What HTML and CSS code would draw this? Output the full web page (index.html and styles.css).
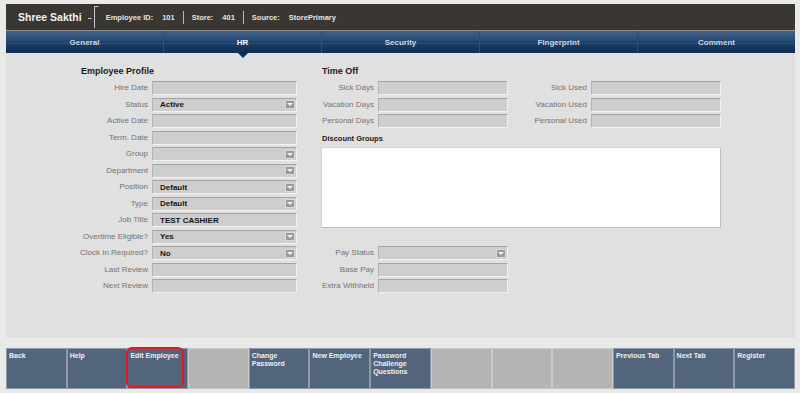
FILE: index.html
```html
<!DOCTYPE html>
<html lang="en">
<head>
    <meta charset="UTF-8">
    <title>Employee - HR</title>
    <link rel="stylesheet" href="styles.css">
</head>
<body>
    <div class="app">
        <header class="top-bar">
            <span class="emp-name">Shree Sakthi</span>
            <svg class="bracket" width="11" height="22" viewBox="0 0 11 22">
                <path d="M0 12.5H3.5M6.5 0.5V22M6.5 0.5H10.5" stroke="#c8c8c8" stroke-width="1" fill="none"/>
            </svg>
            <span class="meta-label">Employee ID:</span><span class="meta-value">101</span>
            <span class="meta-sep"></span>
            <span class="meta-label">Store:</span><span class="meta-value">401</span>
            <span class="meta-sep"></span>
            <span class="meta-label">Source:</span><span class="meta-value">StorePrimary</span>
        </header>

        <nav class="tabs">
            <div class="tab">General</div>
            <div class="tab active">HR</div>
            <div class="tab">Security</div>
            <div class="tab">Fingerprint</div>
            <div class="tab">Comment</div>
        </nav>

        <main class="panel">
            <section class="profile">
                <h3 class="section-title">Employee Profile</h3>
                <div class="form-grid">
                    <label>Hire Date</label><div class="field"></div>
                    <label>Status</label><div class="field select"><span class="value">Active</span><span class="arrow"></span></div>
                    <label>Active Date</label><div class="field"></div>
                    <label>Term. Date</label><div class="field"></div>
                    <label>Group</label><div class="field select"><span class="value"></span><span class="arrow"></span></div>
                    <label>Department</label><div class="field select"><span class="value"></span><span class="arrow"></span></div>
                    <label>Position</label><div class="field select"><span class="value">Default</span><span class="arrow"></span></div>
                    <label>Type</label><div class="field select"><span class="value">Default</span><span class="arrow"></span></div>
                    <label>Job Title</label><div class="field"><span class="value">TEST CASHIER</span></div>
                    <label>Overtime Eligible?</label><div class="field select"><span class="value">Yes</span><span class="arrow"></span></div>
                    <label>Clock In Required?</label><div class="field select"><span class="value">No</span><span class="arrow"></span></div>
                    <label>Last Review</label><div class="field"></div>
                    <label>Next Review</label><div class="field"></div>
                </div>
            </section>

            <section class="time-off">
                <h3 class="section-title">Time Off</h3>
                <div class="form-grid days-grid">
                    <label>Sick Days</label><div class="field"></div>
                    <label>Sick Used</label><div class="field"></div>
                    <label>Vacation Days</label><div class="field"></div>
                    <label>Vacation Used</label><div class="field"></div>
                    <label>Personal Days</label><div class="field"></div>
                    <label>Personal Used</label><div class="field"></div>
                </div>
                <div class="discount-label">Discount Groups</div>
                <div class="discount-box"></div>
                <div class="form-grid pay-grid">
                    <label>Pay Status</label><div class="field select"><span class="value"></span><span class="arrow"></span></div>
                    <label>Base Pay</label><div class="field"></div>
                    <label>Extra Withheld</label><div class="field"></div>
                </div>
            </section>
        </main>

        <footer class="buttons">
            <div class="btn">Back</div>
            <div class="btn">Help</div>
            <div class="btn highlighted">Edit Employee</div>
            <div class="btn empty"></div>
            <div class="btn">Change<br>Password</div>
            <div class="btn">New Employee</div>
            <div class="btn">Password<br>Challenge<br>Questions</div>
            <div class="btn empty"></div>
            <div class="btn empty"></div>
            <div class="btn empty"></div>
            <div class="btn">Previous Tab</div>
            <div class="btn">Next Tab</div>
            <div class="btn">Register</div>
        </footer>
    </div>
</body>
</html>
```

FILE: styles.css
```css
:root {
    --page-bg: #e9e9e9;
    --panel-bg: #e0e0e0;
    --header-bg: #3a3631;
    --field-bg: #cecece;
    --label-color: #737373;
    --button-bg: #52657c;
    --button-empty: #b4b4b4;
}

body {
    margin: 0;
    background: var(--page-bg);
    font-family: "Liberation Sans", Arial, sans-serif;
}

.app {
    width: 789px;
    padding: 4px 0 0 6px;
}

/* header */
.top-bar {
    height: 26px;
    background: var(--header-bg);
    border-bottom: 1px solid #8c8c8c;
    display: flex;
    align-items: center;
    padding-left: 12px;
    color: #e4e4e4;
}

.emp-name {
    font-size: 10.5px;
    font-weight: bold;
    color: #f2f2f2;
}

.bracket {
    margin-left: 6px;
    margin-right: 7px;
}

.meta-label,
.meta-value {
    font-size: 7.5px;
    font-weight: bold;
}

.meta-value {
    margin-left: 9px;
}

.meta-sep {
    width: 1px;
    height: 13px;
    background: #b8b8b8;
    margin: 0 8px;
}

/* tabs */
.tabs {
    display: flex;
    height: 22px;
    background: linear-gradient(#41638b 0%, #2c5079 35%, #1a3e68 55%, #0f2d53 100%);
}

.tab {
    flex: 1;
    position: relative;
    z-index: 0;
    display: flex;
    align-items: center;
    justify-content: center;
    font-size: 8px;
    font-weight: bold;
    color: #d2d6dc;
    border-left: 1px solid #2d4d74;
}

.tab:first-child {
    border-left: none;
}

.tab::before {
    content: "";
    position: absolute;
    z-index: -1;
    left: 0;
    right: 0;
    top: 12px;
    border-top: 1px dotted #3f6088;
}

.tab.active {
    color: #ffffff;
}

.tab.active::after {
    content: "";
    position: absolute;
    bottom: -5px;
    left: 50%;
    margin-left: -5px;
    border-left: 5px solid transparent;
    border-right: 5px solid transparent;
    border-top: 5px solid #0f2d53;
}

/* panel */
.panel {
    height: 285px;
    background: var(--panel-bg);
    display: flex;
    box-sizing: border-box;
    padding-top: 13px;
}

.section-title {
    margin: 0 0 4px;
    font-size: 9px;
    line-height: 11px;
    font-weight: bold;
    color: #1a1a1a;
}

.profile {
    width: 291px;
}

.profile .section-title {
    margin-left: 75px;
}

.time-off {
    margin-left: 25px;
}

.form-grid {
    display: grid;
    grid-template-columns: 142px 145px;
    grid-auto-rows: 16.5px;
    column-gap: 4px;
}

.days-grid {
    grid-template-columns: 52px 130px 75px 130px;
}

.pay-grid {
    grid-template-columns: 52px 130px;
}

.form-grid label {
    font-size: 8px;
    color: var(--label-color);
    text-align: right;
    line-height: 14px;
    white-space: nowrap;
}

.field {
    height: 14px;
    box-sizing: border-box;
    background: var(--field-bg);
    border-top: 1px solid #a4a4a4;
    border-left: 1px solid #b4b4b4;
    border-right: 1px solid #f2f2f2;
    border-bottom: 1px solid #f2f2f2;
    display: flex;
    align-items: center;
}

.value {
    flex: 1;
    padding-left: 7px;
    font-size: 8px;
    font-weight: bold;
    color: #151515;
}

.arrow {
    width: 10px;
    height: 9px;
    box-sizing: border-box;
    margin-right: 1px;
    background: #999999;
    border: 1px solid #dadada;
    display: flex;
    align-items: center;
    justify-content: center;
}

.arrow::after {
    content: "";
    border-left: 3px solid transparent;
    border-right: 3px solid transparent;
    border-top: 3px solid #f4f4f4;
}

.discount-label {
    height: 16.5px;
    line-height: 16.5px;
    font-size: 7.5px;
    font-weight: bold;
    color: #1a1a1a;
}

.discount-box {
    width: 400px;
    height: 81px;
    margin-left: -1px;
    box-sizing: border-box;
    background: #ffffff;
    border: 1px solid #d4d4d4;
    border-right-color: #bdbdbd;
    border-bottom-color: #bdbdbd;
    margin-bottom: 18px;
}

/* bottom buttons */
.buttons {
    display: grid;
    grid-template-columns: repeat(13, 1fr);
    height: 41px;
    margin-top: 10px;
}

.btn {
    position: relative;
    background: var(--button-bg);
    border: 1px solid #8e9aa7;
    padding: 3px 2px;
    font-size: 7px;
    line-height: 8px;
    font-weight: bold;
    color: #eef0f2;
}

.btn.empty {
    background: var(--button-empty);
    border-color: #cacaca;
}

.btn.highlighted::after {
    content: "";
    position: absolute;
    left: -2px;
    right: 3px;
    top: -2px;
    bottom: 0;
    border: 2px solid #e8161b;
    border-radius: 6px;
}
```
